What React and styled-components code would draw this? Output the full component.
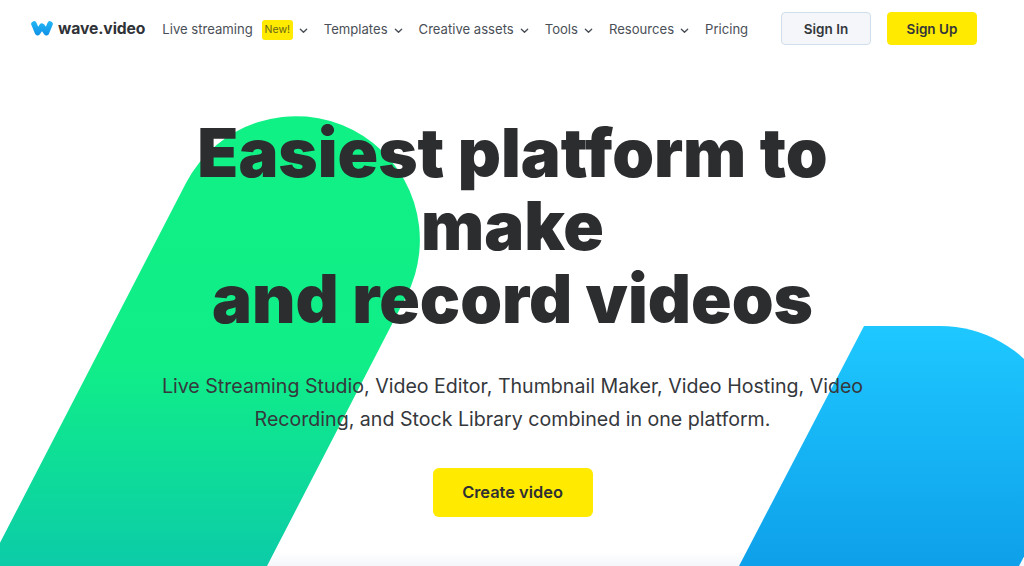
import styled, { createGlobalStyle } from "styled-components";

const GlobalStyle = createGlobalStyle`
    html, body {
        margin: 0;
        padding: 0;
        background: #fff;
    }
    * {
        box-sizing: border-box;
    }
`

const Chevron = () => (
    <ChevronIcon viewBox="0 0 10 10" fill="none" stroke="#4a4f57" strokeWidth="1.5" strokeLinecap="round" strokeLinejoin="round">
        <path d="M1.5 3.5 L5 7 L8.5 3.5" />
    </ChevronIcon>
);

const Logo = () => (
    <LogoIcon viewBox="0 0 22 15">
        <defs>
            <linearGradient id="logoBlue" gradientUnits="userSpaceOnUse" x1="0" y1="0" x2="0" y2="15">
                <stop offset="0" stopColor="#22b8f5" />
                <stop offset="1" stopColor="#0f8fe6" />
            </linearGradient>
        </defs>
        <path fill="none" stroke="url(#logoBlue)" strokeWidth="5.6" strokeLinecap="round" strokeLinejoin="round" d="M3 3 L6.6 11.6 L11 5.2 L15.4 11.6 L19 3" />
    </LogoIcon>
);

const Shapes = () => (
    <ShapesLayer viewBox="0 0 1024 566">
        <defs>
            <linearGradient id="greenFill" gradientUnits="userSpaceOnUse" x1="0" y1="116" x2="0" y2="566">
                <stop offset="0" stopColor="#10f185" />
                <stop offset="0.55" stopColor="#10ee88" />
                <stop offset="1" stopColor="#0ccca8" />
            </linearGradient>
            <linearGradient id="blueFill" gradientUnits="userSpaceOnUse" x1="0" y1="326" x2="0" y2="566">
                <stop offset="0" stopColor="#1ec8ff" />
                <stop offset="1" stopColor="#0ea0ea" />
            </linearGradient>
        </defs>
        <path fill="url(#greenFill)" d="M186 183 A120 120 0 0 1 406 297 L267 566 L-12 566 Z" />
        <path fill="url(#blueFill)" d="M864 326 L940 326 A124 124 0 0 1 1050 507 L1019 566 L739 566 Z" />
    </ShapesLayer>
);

const navItems = [
    { label: "Templates", arrow: true },
    { label: "Creative assets", arrow: true },
    { label: "Tools", arrow: true },
    { label: "Resources", arrow: true },
    { label: "Pricing" },
];

const App = () => {
    return (<Page>
        <GlobalStyle />
        <BottomFade />
        <Shapes />
        <Header>
            <Brand>
                <Logo />
                <BrandName>wave.video</BrandName>
            </Brand>
            <Nav>
                <NavItem>
                    Live streaming
                    <NewBadge>New!</NewBadge>
                    <Chevron />
                </NavItem>
                {navItems.map((item) => (
                    <NavItem key={item.label}>
                        {item.label}
                        {item.arrow && <Chevron />}
                    </NavItem>
                ))}
            </Nav>
            <Actions>
                <HeaderButton>Sign In</HeaderButton>
                <HeaderButton $primary>Sign Up</HeaderButton>
            </Actions>
        </Header>
        <Hero>
            <Title>Easiest platform to make<br />and record videos</Title>
            <Description>Live Streaming Studio, Video Editor, Thumbnail Maker, Video Hosting, Video Recording, and Stock Library combined in one platform.</Description>
            <CreateButton>Create video</CreateButton>
        </Hero>
    </Page>);
}

export default App;

const Page = styled.div`
    position: relative;
    width: 1024px;
    height: 566px;
    overflow: hidden;
    background: #fff;
    font-family: Inter, "Liberation Sans", sans-serif;
    color: #2b2d2f;
`

const ShapesLayer = styled.svg`
    position: absolute;
    left: 0;
    top: 0;
    width: 1024px;
    height: 566px;
`

const BottomFade = styled.div`
    position: absolute;
    left: 0;
    right: 0;
    bottom: 0;
    height: 14px;
    background: linear-gradient(#fff, #f4f6fa);
`

const Header = styled.header`
    position: relative;
    display: flex;
    align-items: center;
    height: 57px;
    padding: 0 47px 0 31px;
`

const Brand = styled.div`
    display: flex;
    align-items: center;
    gap: 5px;
    margin-right: 17px;
`

const LogoIcon = styled.svg`
    width: 22px;
    height: 15px;
`

const BrandName = styled.span`
    font-size: 15.7px;
    font-weight: 700;
    letter-spacing: -0.1px;
    color: #2f3236;
`

const Nav = styled.nav`
    display: flex;
    align-items: center;
    gap: 16px;
`

const NavItem = styled.a`
    display: flex;
    align-items: center;
    font-size: 13.1px;
    color: #4a4f57;
    white-space: nowrap;
`

const NewBadge = styled.span`
    display: inline-flex;
    align-items: center;
    justify-content: center;
    width: 31px;
    height: 20px;
    margin: 2px 0 0 9px;
    border-radius: 3px;
    background: #ffea00;
    font-size: 10.5px;
    color: #66661a;
`

const ChevronIcon = styled.svg`
    width: 9px;
    height: 9px;
    margin: 4px 0 0 6px;
`

const Actions = styled.div`
    display: flex;
    align-items: center;
    gap: 16px;
    margin-left: auto;
`

const HeaderButton = styled.button`
    width: 90px;
    height: 33px;
    padding: 0;
    border: 1px solid ${(props) => (props.$primary ? "#ffea00" : "#cfdeea")};
    border-radius: 4px;
    background: ${(props) => (props.$primary ? "#ffea00" : "#f4f6fa")};
    font-family: inherit;
    font-size: 13.5px;
    font-weight: 600;
    color: #33363a;
`

const Hero = styled.section`
    position: relative;
    display: flex;
    flex-direction: column;
    align-items: center;
    padding: 59px 0 0 1px;
`

const Title = styled.h1`
    width: 680px;
    margin: 0;
    font-size: 67px;
    font-weight: 900;
    line-height: 73px;
    text-align: center;
    color: #2b2d2f;
`

const Description = styled.p`
    width: 720px;
    margin: 35px 0 0;
    font-size: 19.6px;
    line-height: 33px;
    text-align: center;
    color: #35383c;
`

const CreateButton = styled.button`
    width: 160px;
    height: 49px;
    margin-top: 32px;
    padding-bottom: 2px;
    border: none;
    border-radius: 6px;
    background: #ffea00;
    font-family: inherit;
    font-size: 16.4px;
    font-weight: 600;
    color: #2f3033;
`
